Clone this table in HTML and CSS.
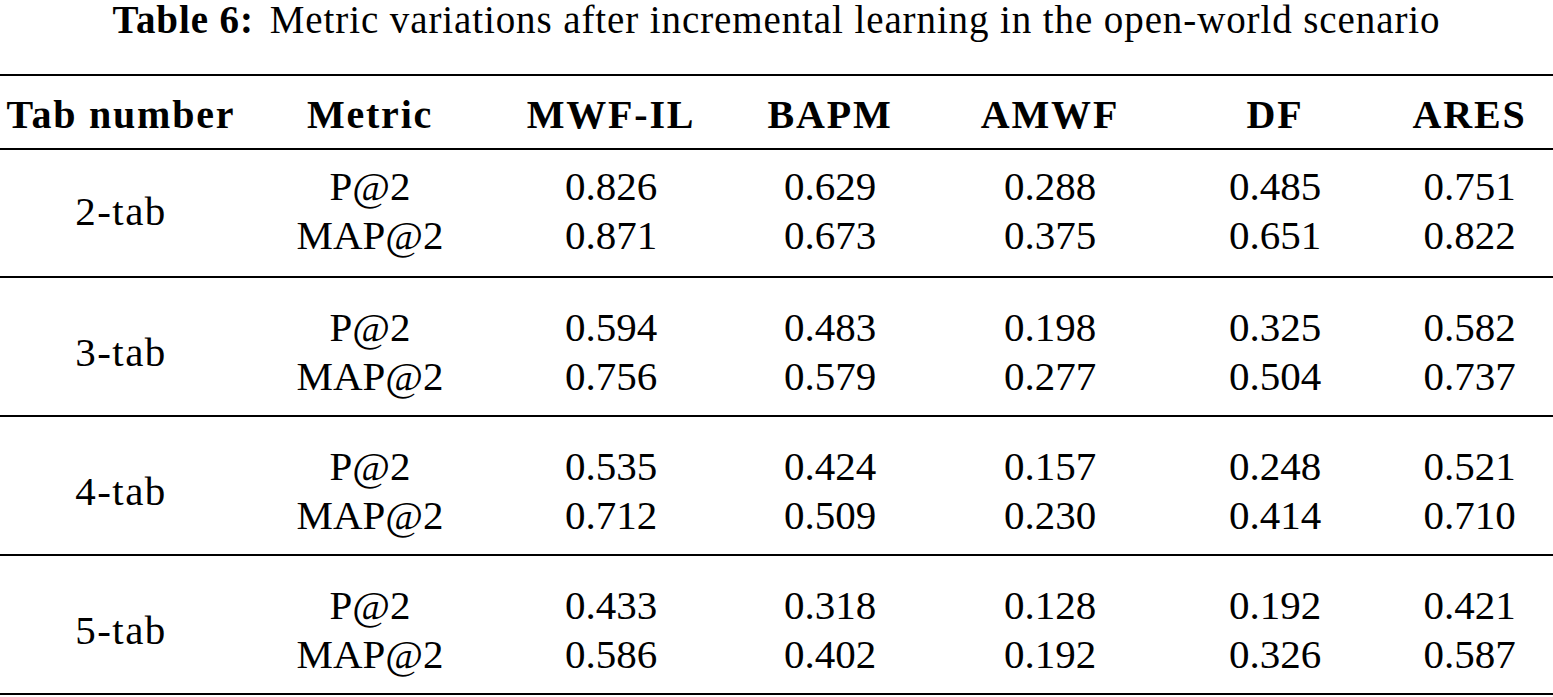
FILE: index.html
```html
<!DOCTYPE html>
<html lang="en">
<head>
<meta charset="utf-8">
<title>Table 6</title>
<link rel="stylesheet" href="styles.css">
</head>
<body>
<div class="caption"><span class="label">Table 6:</span>Metric variations after incremental learning in the open-world scenario</div>
<table class="results">
  <colgroup>
    <col class="c1"><col class="c2"><col class="c3"><col class="c4"><col class="c5"><col class="c6"><col class="c7">
  </colgroup>
  <thead>
    <tr>
      <th>Tab number</th><th>Metric</th><th>MWF-IL</th><th>BAPM</th><th>AMWF</th><th>DF</th><th>ARES</th>
    </tr>
  </thead>
  <tbody class="group first">
    <tr class="top"><td rowspan="2" class="tab">2-tab</td><td>P@2</td><td>0.826</td><td>0.629</td><td>0.288</td><td>0.485</td><td>0.751</td></tr>
    <tr class="bottom"><td>MAP@2</td><td>0.871</td><td>0.673</td><td>0.375</td><td>0.651</td><td>0.822</td></tr>
  </tbody>
  <tbody class="group">
    <tr class="top"><td rowspan="2" class="tab">3-tab</td><td>P@2</td><td>0.594</td><td>0.483</td><td>0.198</td><td>0.325</td><td>0.582</td></tr>
    <tr class="bottom"><td>MAP@2</td><td>0.756</td><td>0.579</td><td>0.277</td><td>0.504</td><td>0.737</td></tr>
  </tbody>
  <tbody class="group">
    <tr class="top"><td rowspan="2" class="tab">4-tab</td><td>P@2</td><td>0.535</td><td>0.424</td><td>0.157</td><td>0.248</td><td>0.521</td></tr>
    <tr class="bottom"><td>MAP@2</td><td>0.712</td><td>0.509</td><td>0.230</td><td>0.414</td><td>0.710</td></tr>
  </tbody>
  <tbody class="group last">
    <tr class="top"><td rowspan="2" class="tab">5-tab</td><td>P@2</td><td>0.433</td><td>0.318</td><td>0.128</td><td>0.192</td><td>0.421</td></tr>
    <tr class="bottom"><td>MAP@2</td><td>0.586</td><td>0.402</td><td>0.192</td><td>0.326</td><td>0.587</td></tr>
  </tbody>
</table>
</body>
</html>
```
FILE: styles.css
```css
html, body {
  margin: 0;
  padding: 0;
  background: #fff;
  color: #000;
  font-family: "Liberation Serif", "Times New Roman", serif;
}

.caption {
  text-align: center;
  font-size: 39px;
  line-height: 40px;
  height: 40px;
  letter-spacing: 0.9px;
  margin-bottom: 34px;
  white-space: nowrap;
}

.caption .label {
  font-weight: bold;
  margin-right: 16px;
}

.results {
  width: 1553px;
  table-layout: fixed;
  border-collapse: collapse;
  border-spacing: 0;
}

.c1 { width: 242px; }
.c2 { width: 256px; }
.c3 { width: 226px; }
.c4 { width: 212px; }
.c5 { width: 228px; }
.c6 { width: 222px; }
.c7 { width: 167px; }

.results th,
.results td {
  padding: 0;
  text-align: center;
  white-space: nowrap;
}

.results thead tr {
  border-top: 2px solid #000;
}

.results th {
  font-weight: bold;
  font-size: 40px;
  letter-spacing: 1.8px;
  line-height: 44px;
  padding-top: 17px;
  padding-bottom: 11px;
}

.results td {
  font-size: 41px;
  line-height: 49px;
}

.results td.tab {
  vertical-align: middle;
  letter-spacing: 1.5px;
}

.group {
  border-top: 2px solid #000;
}

.group.last {
  border-bottom: 2px solid #000;
}

.group .top td { padding-top: 25px; }
.group .bottom td { padding-bottom: 14px; }
.group.first .top td { padding-top: 12px; }
.group.first .bottom td { padding-bottom: 16px; }
.group td.tab { padding-top: 25px; padding-bottom: 14px; }
.group.first td.tab { padding-top: 12px; padding-bottom: 16px; }
```
